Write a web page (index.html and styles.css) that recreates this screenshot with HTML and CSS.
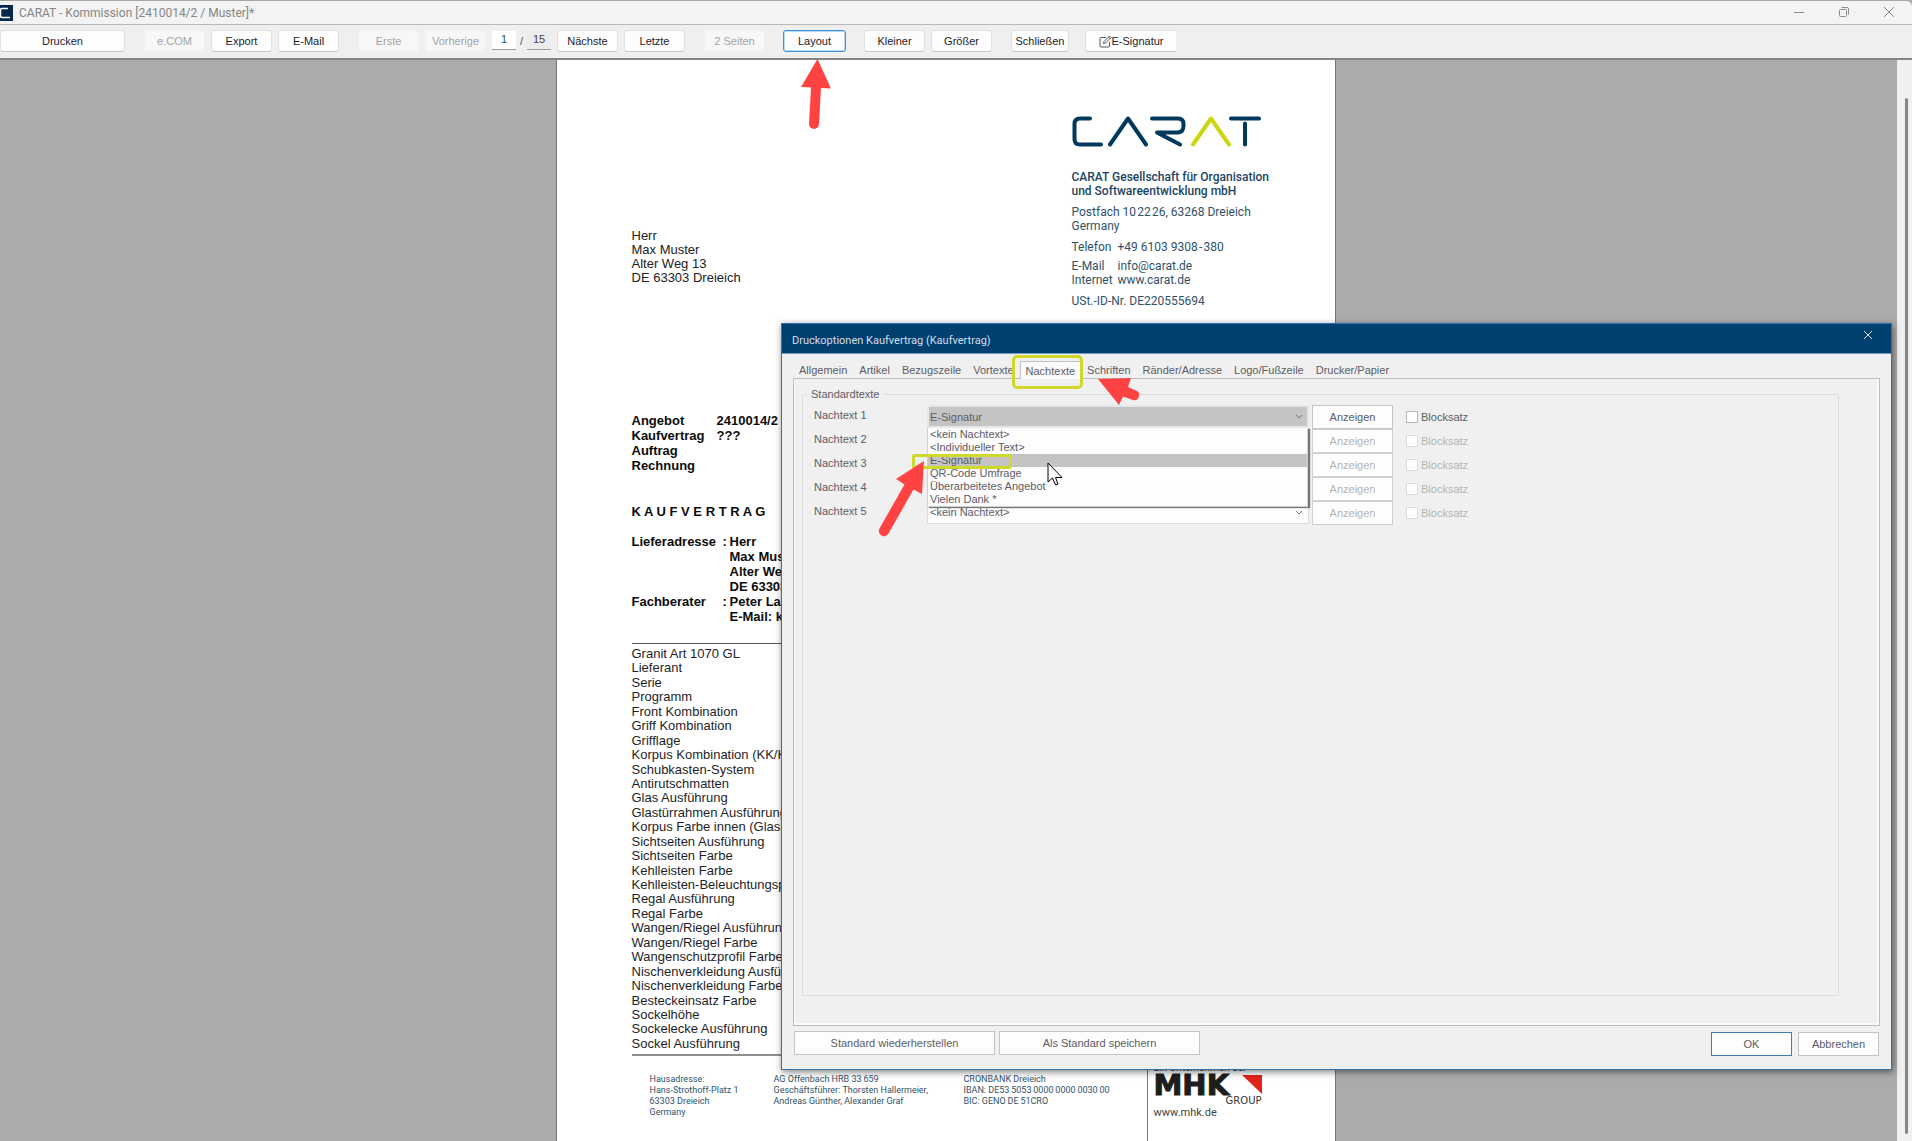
FILE: index.html
```html
<!DOCTYPE html>
<html lang="de">
<head>
<meta charset="utf-8">
<title>CARAT - Kommission [2410014/2 / Muster]*</title>
<link rel="stylesheet" href="styles.css">
</head>
<body>
<header class="titlebar">
  <svg class="app-icon" width="13" height="16" viewBox="0 0 13 16" aria-hidden="true"><rect width="13" height="16" fill="#04294a"/><path d="M8 3.500H2Q0.500 3.500 0.500 5V11Q0.500 12.500 2 12.500H10" stroke="#fff" stroke-width="1.500" fill="none"/></svg>
  <h1 class="app-title">CARAT - Kommission [2410014/2 / Muster]*</h1>
  <div class="window-buttons">
    <button type="button" aria-label="Minimieren"><svg width="12" height="12" viewBox="0 0 12 12"><path d="M1 6.500H11"/></svg></button>
    <button type="button" aria-label="Wiederherstellen"><svg width="12" height="12" viewBox="0 0 12 12"><rect x="1.500" y="3.500" width="7" height="7" rx="1"/><path d="M3.500 1.500H9Q10.500 1.500 10.500 3V8.500"/></svg></button>
    <button type="button" aria-label="Schließen"><svg width="12" height="12" viewBox="0 0 12 12"><path d="M1 1L11 11M11 1L1 11"/></svg></button>
  </div>
</header>

<nav class="toolbar">
  <button type="button" class="tool tool-print">Drucken</button>
  <div class="tool-group">
    <button type="button" class="tool" disabled>e.COM</button>
    <button type="button" class="tool">Export</button>
    <button type="button" class="tool">E-Mail</button>
  </div>
  <div class="tool-group">
    <button type="button" class="tool" disabled>Erste</button>
    <button type="button" class="tool" disabled>Vorherige</button>
    <div class="pager">
      <input type="text" value="1" aria-label="Seite"><span>/</span><input type="text" class="total" value="15" readonly aria-label="Seiten gesamt">
    </div>
    <button type="button" class="tool">Nächste</button>
    <button type="button" class="tool">Letzte</button>
  </div>
  <button type="button" class="tool" disabled>2 Seiten</button>
  <button type="button" class="tool tool-active">Layout</button>
  <div class="tool-group">
    <button type="button" class="tool">Kleiner</button>
    <button type="button" class="tool">Größer</button>
  </div>
  <div class="tool-group tool-group-end">
    <button type="button" class="tool tool-close">Schließen</button>
    <button type="button" class="tool tool-sign"><svg width="13" height="13" viewBox="0 0 13 13" aria-hidden="true"><path d="M7 2.500H2Q1 2.500 1 3.500V11Q1 12 2 12H9.500Q10.500 12 10.500 11V7"/><path d="M4.500 8.500L5 6.500L10.500 1L12 2.500L6.500 8L4.500 8.500M9.500 2L11 3.500"/></svg>E-Signatur</button>
  </div>
</nav>

<main class="workspace">
  <div class="canvas">
    <article class="letter">
      <div class="letter-head">
        <address class="recipient">Herr<br>Max Muster<br>Alter Weg 13<br>DE 63303 Dreieich</address>
        <div class="sender">
          <svg class="carat-logo" width="190" height="32" viewBox="0 0 190 32" role="img" aria-label="CARAT">
            <g fill="none" stroke="#00395d" stroke-width="4" stroke-linecap="round" stroke-linejoin="round">
              <path d="M18 2.500H8Q2.500 2.500 2.500 8V23Q2.500 28.500 8 28.500H29"/>
              <path d="M38 28.500L56 2.500L74 28.500"/>
              <path d="M80 2.500H106Q111.500 2.500 111.500 8V10Q111.500 16 106 16.500H85L108 28.500"/>
              <path d="M159 2.500H187M173 7.500V28.500"/>
              <path d="M121 28.500L139 2.500L157 28.500" stroke="#cbd60f"/>
            </g>
          </svg>
          <p class="company">CARAT Gesellschaft für Organisation<br>und Softwareentwicklung mbH</p>
          <p>Postfach 10&#8202;22&#8202;26, 63268 Dreieich<br>Germany</p>
          <dl class="contact contact-phone"><dt>Telefon</dt><dd>+49 6103 9308&#8202;-&#8202;380</dd></dl>
          <dl class="contact"><dt>E-Mail</dt><dd>info@carat.de</dd><dt>Internet</dt><dd>www.carat.de</dd></dl>
          <p>USt.-ID-Nr. DE220555694</p>
        </div>
      </div>

      <dl class="numbers">
        <dt>Angebot</dt><dd>2410014/2</dd>
        <dt>Kaufvertrag</dt><dd>???</dd>
        <dt>Auftrag</dt><dd></dd>
        <dt>Rechnung</dt><dd></dd>
      </dl>
      <h2 class="doc-title">K A U F V E R T R A G</h2>
      <dl class="parties">
        <dt>Lieferadresse</dt><dd class="colon">:</dd><dd>Herr<br>Max Muster<br>Alter Weg 13<br>DE 63303 Dreieich</dd>
        <dt>Fachberater</dt><dd class="colon">:</dd><dd>Peter Lang<br>E-Mail: kontakt@carat.de</dd>
      </dl>

      <ul class="features">
        <li>Granit Art 1070 GL</li>
        <li>Lieferant</li>
        <li>Serie</li>
        <li>Programm</li>
        <li>Front Kombination</li>
        <li>Griff Kombination</li>
        <li>Grifflage</li>
        <li>Korpus Kombination (KK/KF)</li>
        <li>Schubkasten-System</li>
        <li>Antirutschmatten</li>
        <li>Glas Ausführung</li>
        <li>Glastürrahmen Ausführung</li>
        <li>Korpus Farbe innen (Glasschrank)</li>
        <li>Sichtseiten Ausführung</li>
        <li>Sichtseiten Farbe</li>
        <li>Kehlleisten Farbe</li>
        <li>Kehlleisten-Beleuchtungsprofil</li>
        <li>Regal Ausführung</li>
        <li>Regal Farbe</li>
        <li>Wangen/Riegel Ausführung</li>
        <li>Wangen/Riegel Farbe</li>
        <li>Wangenschutzprofil Farbe</li>
        <li>Nischenverkleidung Ausführung</li>
        <li>Nischenverkleidung Farbe</li>
        <li>Besteckeinsatz Farbe</li>
        <li>Sockelhöhe</li>
        <li>Sockelecke Ausführung</li>
        <li>Sockel Ausführung</li>
      </ul>

      <footer class="letter-foot">
        <p>Hausadresse:<br>Hans-Strothoff-Platz 1<br>63303 Dreieich<br>Germany</p>
        <p>AG Offenbach HRB 33&#8201;659<br>Geschäftsführer: Thorsten Hallermeier,<br>Andreas Günther, Alexander Graf</p>
        <p>CRONBANK Dreieich<br>IBAN: DE53&#8201;5053&#8201;0000&#8201;0000&#8201;0030&#8201;00<br>BIC: GENO&#8201;DE&#8201;51CRO</p>
        <div class="group-brand">
          <span class="claim">Ein Unternehmen der</span>
          <span class="mhk">MHK<svg width="20" height="20" viewBox="0 0 20 20" aria-hidden="true"><path d="M0 0H20V19Z" fill="#e2231a"/></svg></span>
          <span class="group">GROUP</span>
          <a href="#mhk">www.mhk.de</a>
        </div>
      </footer>
    </article>
  </div>
  <div class="scrollbar" aria-hidden="true"><span></span></div>
</main>

<section class="dialog" role="dialog" aria-labelledby="dialog-title">
  <header class="dialog-bar">
    <h2 id="dialog-title">Druckoptionen Kaufvertrag (Kaufvertrag)</h2>
    <button type="button" aria-label="Dialog schließen"><svg width="10" height="10" viewBox="0 0 10 10"><path d="M1 1L9 9M9 1L1 9"/></svg></button>
  </header>
  <div class="dialog-body">
    <div class="tabs" role="tablist">
      <button type="button" role="tab">Allgemein</button>
      <button type="button" role="tab">Artikel</button>
      <button type="button" role="tab">Bezugszeile</button>
      <button type="button" role="tab">Vortexte</button>
      <button type="button" role="tab" class="selected" aria-selected="true">Nachtexte</button>
      <button type="button" role="tab">Schriften</button>
      <button type="button" role="tab">Ränder/Adresse</button>
      <button type="button" role="tab">Logo/Fußzeile</button>
      <button type="button" role="tab">Drucker/Papier</button>
    </div>
    <div class="tab-panel" role="tabpanel">
      <fieldset class="texts">
        <legend>Standardtexte</legend>
        <div class="text-row">
          <label for="text1">Nachtext 1</label>
          <div class="combo combo-open"><select id="text1"><option>E-Signatur</option></select><svg width="8" height="6" viewBox="0 0 8 6" aria-hidden="true"><path d="M1 1L4 4L7 1"/></svg>
            <ul class="options" role="listbox">
              <li>&lt;kein Nachtext&gt;</li>
              <li>&lt;Individueller Text&gt;</li>
              <li class="current">E-Signatur</li>
              <li>QR-Code Umfrage</li>
              <li>Überarbeitetes Angebot</li>
              <li>Vielen Dank *</li>
            </ul>
          </div>
          <button type="button" class="push">Anzeigen</button>
          <label class="check"><input type="checkbox">Blocksatz</label>
        </div>
        <div class="text-row">
          <label for="text2">Nachtext 2</label>
          <div class="combo"><select id="text2"><option>&lt;kein Nachtext&gt;</option></select><svg width="8" height="6" viewBox="0 0 8 6" aria-hidden="true"><path d="M1 1L4 4L7 1"/></svg></div>
          <button type="button" class="push" disabled>Anzeigen</button>
          <label class="check off"><input type="checkbox" disabled>Blocksatz</label>
        </div>
        <div class="text-row">
          <label for="text3">Nachtext 3</label>
          <div class="combo"><select id="text3"><option>&lt;kein Nachtext&gt;</option></select><svg width="8" height="6" viewBox="0 0 8 6" aria-hidden="true"><path d="M1 1L4 4L7 1"/></svg></div>
          <button type="button" class="push" disabled>Anzeigen</button>
          <label class="check off"><input type="checkbox" disabled>Blocksatz</label>
        </div>
        <div class="text-row">
          <label for="text4">Nachtext 4</label>
          <div class="combo"><select id="text4"><option>&lt;kein Nachtext&gt;</option></select><svg width="8" height="6" viewBox="0 0 8 6" aria-hidden="true"><path d="M1 1L4 4L7 1"/></svg></div>
          <button type="button" class="push" disabled>Anzeigen</button>
          <label class="check off"><input type="checkbox" disabled>Blocksatz</label>
        </div>
        <div class="text-row">
          <label for="text5">Nachtext 5</label>
          <div class="combo"><select id="text5"><option>&lt;kein Nachtext&gt;</option></select><svg width="8" height="6" viewBox="0 0 8 6" aria-hidden="true"><path d="M1 1L4 4L7 1"/></svg></div>
          <button type="button" class="push" disabled>Anzeigen</button>
          <label class="check off"><input type="checkbox" disabled>Blocksatz</label>
        </div>
      </fieldset>
    </div>
    <footer class="dialog-foot">
      <button type="button" class="push wide">Standard wiederherstellen</button>
      <button type="button" class="push wide">Als Standard speichern</button>
      <div class="confirm">
        <button type="button" class="push primary">OK</button>
        <button type="button" class="push">Abbrechen</button>
      </div>
    </footer>
  </div>

  <div class="mark mark-tab"></div>
  <div class="mark mark-option"></div>
  <svg class="arrow arrow-tab" width="42" height="28" viewBox="0 0 42 28" aria-hidden="true"><path d="M0 1L33 0L30 9L38 12.500A5 5 0 0 1 35 22L25 18.500L21 27Z"/></svg>
  <svg class="arrow arrow-option" width="46" height="76" viewBox="0 0 46 76" aria-hidden="true"><path d="M45 0L43 33L34.500 28.500L9.500 72.500A5 5 0 0 1 0.500 67.500L25.500 23.500L17 18Z"/></svg>
  <svg class="pointer" width="17" height="25" viewBox="0 0 17 25" aria-hidden="true"><path d="M1 1V20L5.500 16L8.500 23L11 22L8.500 15.500H15Z" fill="#fff" stroke="#000" stroke-width="1"/></svg>
</section>

<svg class="arrow arrow-layout" width="30" height="72" viewBox="0 0 30 72" aria-hidden="true"><path d="M16.500 0L30 29.500L20 29L18 65A5 5 0 0 1 8 65L10 28.500L0 28Z"/></svg>
</body>
</html>
```
FILE: styles.css
```css
* { box-sizing: border-box; }

body {
  margin: 0;
  height: 100vh;
  display: flex;
  flex-direction: column;
  position: relative;
  overflow: hidden;
  background: #ababab;
  font-family: "Liberation Sans", Arial, sans-serif;
  font-size: 11px;
  color: #1c1c2a;
}

h1, h2, p, dl, dd, ul { margin: 0; padding: 0; }
ul { list-style: none; }
button, input, select { font: inherit; color: inherit; }

/* Title bar */
.titlebar {
  flex: none;
  height: 25px;
  display: flex;
  align-items: center;
  border-top: 1px solid #a6a6a6;
  border-bottom: 1px solid #b9b9b9;
  border-top-right-radius: 6px;
  background: #f3f3f3;
}
.app-title {
  margin-left: 6px;
  font: 12px/18px Roboto, sans-serif;
  color: #858585;
}
.window-buttons { margin-left: auto; display: flex; padding-right: 1px; }
.window-buttons button {
  width: 45px;
  height: 22px;
  padding: 0 0 2px;
  border: 0;
  background: none;
  line-height: 0;
}
.window-buttons svg { fill: none; stroke: #8c8c8c; stroke-width: 1; }

/* Toolbar */
.toolbar {
  flex: none;
  height: 35px;
  display: flex;
  gap: 19px;
  padding-top: 5px;
  border-bottom: 2px solid #858585;
  background: #efefef;
}
.tool-group { display: flex; gap: 6px; }
.tool-group-end { gap: 16px; }
.tool {
  width: 61px;
  height: 22px;
  padding: 0;
  border: 1px solid #e2e2e2;
  border-bottom-color: #c6c6c6;
  border-radius: 3px;
  background: #fdfdfd;
  white-space: nowrap;
}
.tool:disabled { color: #a3a3a3; background: #f7f7f7; border-color: #f1f1f1; }
.tool-print { width: 125px; }
.tool-active { width: 63px; margin: 0 -1px; border: 1px solid #3c8fd9; box-shadow: inset 0 0 0 1px #b9dbf6; }
.tool-close { width: 58px; }
.tool-sign {
  width: 91px;
  display: flex;
  align-items: center;
  justify-content: center;
  border-right: 0;
  border-radius: 3px 0 0 3px;
}
.tool-sign svg { fill: none; stroke: #4a5a66; stroke-width: 1; }
.pager { display: flex; align-items: center; height: 21px; color: #555; }
.pager input {
  width: 24px;
  height: 19px;
  padding: 0 0 2px;
  border: 0;
  border-bottom: 1px solid #9c9c9c;
  background: #fff;
  text-align: center;
  color: #24555f;
}
.pager .total { background: #ececec; color: #444; }
.pager span { width: 11px; text-align: center; }

/* Workspace */
.workspace { flex: 1; min-height: 0; display: flex; }
.canvas { flex: 1; display: flex; justify-content: center; padding-right: 6px; overflow: hidden; }
.scrollbar { width: 15px; padding: 38px 4px 7px 8px; background: #f0f0f0; display: flex; }
.scrollbar span { flex: 1; border-radius: 2px; background: #868686; }

/* Letter */
.letter {
  flex: none;
  width: 780px;
  display: flex;
  flex-direction: column;
  padding: 56px 71px 0 75px;
  border: solid #757575;
  border-width: 0 1px;
  background: #fff;
  font-size: 13px;
  white-space: nowrap;
}
.letter-head { display: grid; grid-template-columns: 440px 1fr; height: 297px; }
.recipient { margin-top: 113px; font-style: normal; line-height: 14px; color: #222; }
.sender {
  font: 12px/14px Roboto, sans-serif;
  color: #2f5269;
  display: flex;
  flex-direction: column;
  gap: 7px;
}
.carat-logo { margin-bottom: 15px; }
.company { font-weight: 500; color: #1c4462; }
.contact { display: grid; grid-template-columns: 46px 1fr; }
.contact-phone { margin-bottom: -2px; }

.numbers, .parties { display: grid; font-weight: bold; line-height: 15px; color: #0c0c0c; }
.numbers { grid-template-columns: 85px 1fr; grid-auto-rows: 15px; }
.doc-title { margin: 31px 0 15px; font-size: 13px; line-height: 15px; color: #0c0c0c; }
.parties { grid-template-columns: 91px 7px 1fr; }

.features {
  height: 413px;
  flex: none;
  margin-top: 19px;
  padding: 3px 0;
  display: flex;
  flex-direction: column;
  justify-content: space-between;
  border-top: 1px solid #555;
  border-bottom: 2px solid #8f8f8f;
  line-height: 14px;
  color: #1e1e28;
}

.letter-foot {
  flex: 1;
  display: grid;
  grid-template-columns: 124px 190px 183px 1fr;
  padding-left: 18px;
  font: 9px/11px Roboto, sans-serif;
  color: #2f5269;
}
.letter-foot p { padding-top: 18px; }
.group-brand {
  display: flex;
  flex-direction: column;
  border-left: 1px solid #777;
  padding: 6px 0 0 6px;
  color: #333;
}
.claim { font-size: 10px; line-height: 12px; }
.mhk {
  display: flex;
  justify-content: space-between;
  align-items: center;
  height: 22px;
  width: 108px;
  font: bold 29px/22px "DejaVu Sans", sans-serif;
  -webkit-text-stroke: 1px #1d1d1b;
  color: #1d1d1b;
}
.group { width: 108px; text-align: right; font: 10px/10px "DejaVu Sans", sans-serif; }
.group-brand a { color: #444; text-decoration: none; font-size: 11px; line-height: 13px; }

/* Dialog window */
.dialog {
  position: absolute;
  left: 781px;
  right: 20px;
  top: 323px;
  height: 747px;
  display: flex;
  flex-direction: column;
  border: 1px solid #2d74ad;
  background: #f0f0f0;
  box-shadow: 1px 2px 7px rgba(0, 0, 0, .5);
  color: #5c5c66;
}
.dialog-bar {
  height: 30px;
  display: flex;
  justify-content: space-between;
  padding: 0 18px 0 10px;
  border-bottom: 1px solid #6f9dbf;
  background: #004071;
}
.dialog-bar h2 {
  padding-top: 4px;
  font: 11px/26px Roboto, sans-serif;
  color: #d3dfe9;
}
.dialog-bar button { height: 10px; margin-top: 6px; padding: 0; border: 0; background: none; line-height: 0; }
.dialog-bar svg { stroke: #d3dfe9; fill: none; }
.dialog-body { flex: 1; display: flex; flex-direction: column; padding: 7px 11px 13px; }

.tabs { height: 17px; display: flex; }
.tabs button { height: 17px; padding: 0 6px; border: 0; background: none; white-space: nowrap; }
.tabs .selected {
  height: 18px;
  padding: 0 5px;
  border: 1px solid #c0c0c0;
  border-bottom: 0;
  background: #fbfbfb;
  z-index: 1;
}
.tab-panel {
  flex: 1;
  padding: 9px 40px 29px 8px;
  border: 1px solid #bcbcbc;
  box-shadow: inset -2px -2px #fafafa, inset 1px 0 #fafafa;
}
.texts {
  height: 100%;
  margin: 0;
  padding: 4px 0 0 11px;
  border: 1px solid #dcdcdc;
  border-radius: 2px;
}
.texts legend { margin-left: -7px; padding: 0 4px; line-height: 13px; }
.text-row {
  display: grid;
  grid-template-columns: 110px 382px 81px auto;
  column-gap: 3px;
  height: 24px;
}
.text-row > label { line-height: 20px; white-space: nowrap; }
.combo { display: grid; position: relative; height: 23px; }
.combo select {
  grid-area: 1 / 1;
  width: 100%;
  height: 23px;
  padding: 0 0 1px 2px;
  border: 1px solid #dcdcdc;
  border-radius: 0;
  appearance: none;
  background: #fdfdfd;
}
.combo > svg { grid-area: 1 / 1; justify-self: end; align-self: center; margin-right: 6px; fill: none; stroke: #777; }
.combo-open select { border: 2px solid #e6e6e6; padding: 0 0 0 1px; background: #c4c4c4; }
.options {
  position: absolute;
  z-index: 2;
  left: 0;
  top: 23px;
  width: 381px;
  height: 79px;
  border: 1px solid #d0d0d0;
  border-top: 0;
  background: #fdfdfd;
  box-shadow: 2px 1px 1px #777;
}
.options li { padding-left: 2px; line-height: 13px; height: 13px; }
.options .current { background: #c4c4c4; }

.push {
  height: 24px;
  padding: 0;
  border: 1px solid #c4c4c4;
  background: #fdfdfd;
  white-space: nowrap;
}
.push:disabled { color: #b5b5b5; border-color: #cfcfcf; }
.text-row .check { display: flex; align-items: center; gap: 3px; margin-left: 10px; height: 24px; }
.check input {
  appearance: none;
  width: 12px;
  height: 12px;
  margin: 0;
  border: 1px solid #b9b9b9;
  background: #fff;
}
.check.off { color: #b5b5b5; }
.check.off input { border-color: #dcdcdc; }

.dialog-foot { display: flex; gap: 4px; padding: 5px 1px 0; }
.wide { width: 201px; }
.confirm { display: flex; gap: 6px; margin: 1px 0 0 auto; }
.confirm .push { width: 81px; }
.primary { border-color: #3a7fb3; }

/* Callouts over the dialog and toolbar */
.mark { position: absolute; z-index: 3; border: 3px solid #ced92b; border-radius: 5px; }
.mark-tab { left: 230px; top: 31px; width: 71px; height: 34px; }
.mark-option { left: 130px; top: 130px; width: 100px; height: 15px; border-radius: 3px; }
.arrow { position: absolute; z-index: 4; fill: #ff4343; }
.arrow-tab { left: 316px; top: 54px; }
.arrow-option { left: 97px; top: 137px; }
.arrow-layout { left: 801px; top: 59px; }
.pointer { position: absolute; z-index: 4; left: 265px; top: 138px; }
```
